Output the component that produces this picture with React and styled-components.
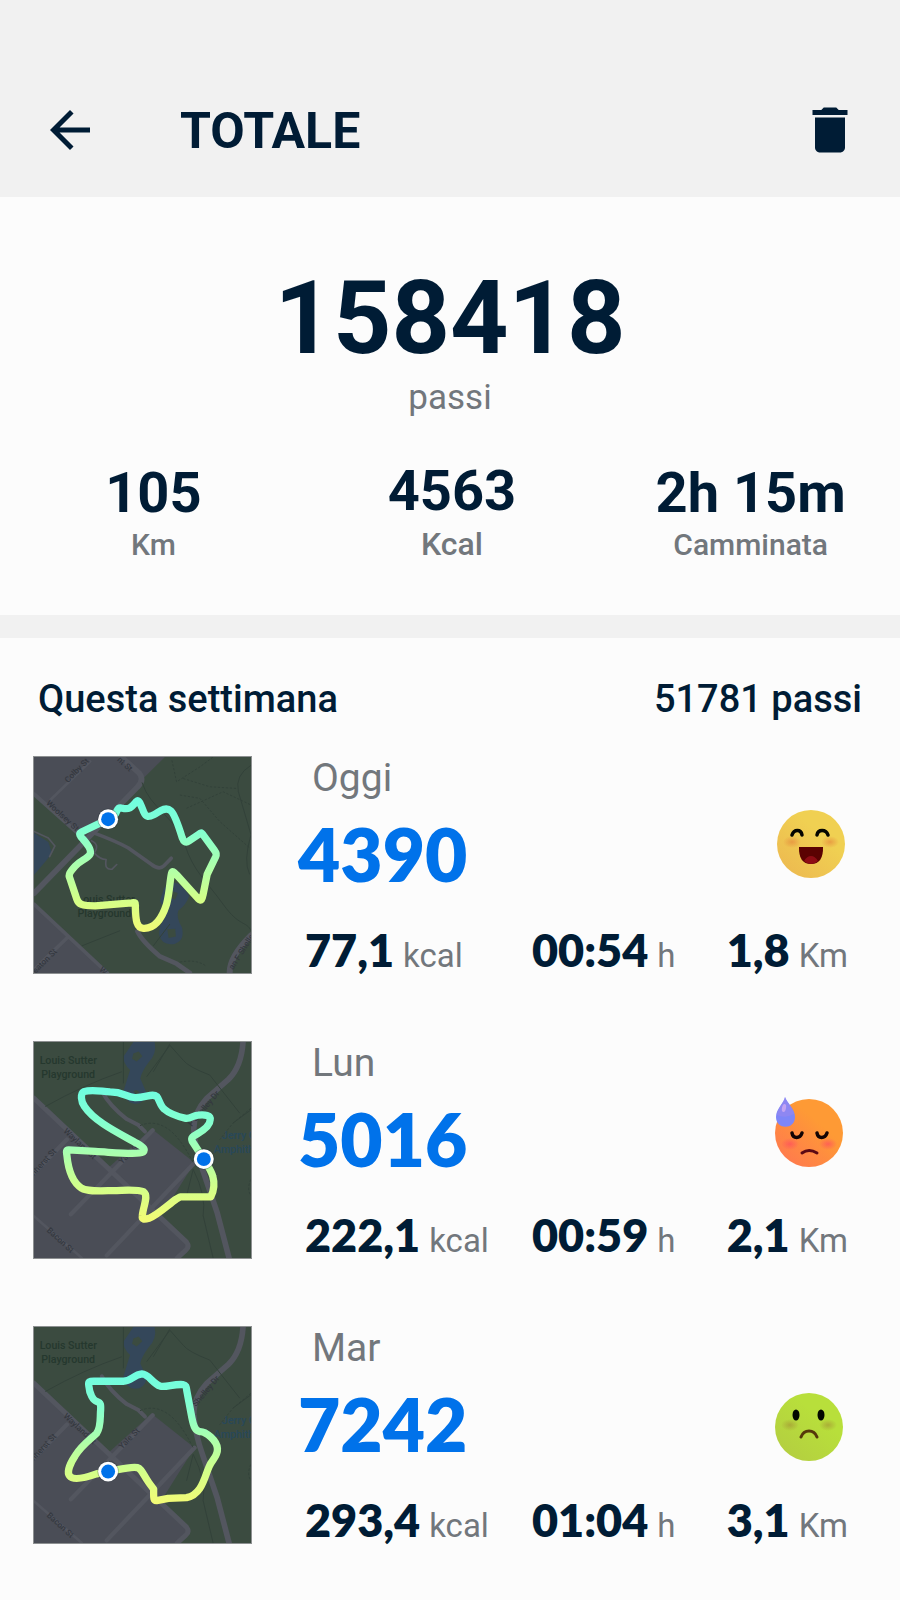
import React from "react";

import styled, { createGlobalStyle } from "styled-components";

import { MdArrowBack, MdDelete } from "react-icons/md";


const GlobalStyle = createGlobalStyle`
  * {
    box-sizing: border-box;
  }

  body {
    margin: 0;
    background: #FCFCFC;
    color: #001C35;
    font-family: Roboto, "Liberation Sans", sans-serif;
  }

  h1, h2, p, ul {
    margin: 0;
    padding: 0;
  }
`;

const Header = styled.header`
  display: flex;
  align-items: center;
  padding: 100px 40px 37px;
  background: #F1F1F1;
`;

const Title = styled.h1`
  flex: 1;
  margin-left: 80px;
  padding-top: 2px;
  font-size: 50px;
  line-height: 58px;
  font-weight: 700;
`;

const IconButton = styled.button`
  display: flex;
  padding: 0;
  border: 0;
  background: none;
  color: inherit;
  font-size: 60px;
  cursor: pointer;
`;

const Summary = styled.section`
  padding: 71px 0 52px;
  border-bottom: 23px solid #F1F1F1;
  text-align: center;
`;

const TotalSteps = styled.p`
  font-size: 102px;
  line-height: 100px;
  font-weight: 700;
`;

const TotalLabel = styled.p`
  margin-top: 10px;
  font-size: 35px;
  line-height: 40px;
  color: #72777C;
`;

const Totals = styled.div`
  display: grid;
  grid-template-columns: repeat(3, 1fr);
  align-items: end;
  margin-top: 41px;
  padding-left: 4px;
`;

const TotalValue = styled.p`
  font-size: 56px;
  line-height: 64px;
  font-weight: 700;
`;

const TotalUnit = styled.p`
  margin-top: 2px;
  font-size: ${(props) => props.$large ? "32px" : "30px"};
  line-height: ${(props) => props.$large ? "38px" : "36px"};
  font-weight: 500;
  color: #72777C;
`;

const WeekHeader = styled.div`
  display: flex;
  justify-content: space-between;
  padding: 39px 38px 35px;
  font-size: 38px;
  line-height: 44px;
  font-weight: 500;
`;

const WeekTitle = styled.h2`
  font-size: inherit;
  font-weight: inherit;
`;

const Days = styled.ul`
  display: flex;
  flex-direction: column;
  gap: 67px;
  padding: 0 52px 54px 33px;
  list-style: none;
`;

const Day = styled.li`
  display: grid;
  grid-template-columns: 219px 1fr;
  column-gap: 46px;
`;

const MapFrame = styled.svg`
  display: block;
  width: 219px;
  height: 218px;
  border: 1px solid #8D9091;
`;

const Info = styled.div`
  display: grid;
  grid-template-columns: 1fr auto;
`;

const DayName = styled.p`
  padding-left: 14px;
  font-size: 39px;
  line-height: 44px;
  color: #72777C;
`;

const DaySteps = styled.p`
  margin-top: 14px;
  font-family: Lato, "Liberation Sans", sans-serif;
  font-size: 73px;
  line-height: 80px;
  font-weight: 800;
  color: #0072EA;
`;

const Face = styled.svg`
  display: block;
  width: 76px;
  height: 138px;
`;

const Stats = styled.div`
  grid-column: 1 / -1;
  display: grid;
  grid-template-columns: 218fr 187fr auto;
  margin-top: 32px;
  padding-left: 7px;
`;

const Stat = styled.p`
  display: flex;
  align-items: baseline;
  gap: 9px;
  height: 48px;
  font-size: 33px;
  line-height: 48px;
  color: #72777C;
  white-space: nowrap;

  strong {
    font-family: Lato, "Liberation Sans", sans-serif;
    font-size: 45px;
    font-weight: 800;
    color: #001C35;
  }
`;

const StreetText = styled.text`
  font-family: Roboto, sans-serif;
  font-size: ${(props) => props.$place ? "32px" : "25px"};
  font-weight: 500;
  fill: ${(props) => props.$fill || "#34383F"};
`;

const road = { fill: "none", stroke: "#53565F", strokeLinecap: "round", strokeLinejoin: "round" };
const trail = { fill: "none", stroke: "#324239", strokeWidth: 3 };

const NorthMap = () => (
    <g>
        <path d="M41 35H435L190 278L41 148Z" fill="#4A4D56" />
        <path d="M41 478L262 688H41Z" fill="#4A4D56" />
        <path d="M41 265L84 292L95 325L78 348L41 392Z" fill="#34475A" />
        <path d="M41 260L84 280L104 304L88 336" {...road} strokeWidth="5" />
        <path d="M432 432Q470 390 508 455Q500 480 475 500Q468 520 486 550Q496 590 464 600Q426 606 418 574Q416 545 432 525Q438 500 420 470Z" fill="#34475A" />
        <path d="M454 440L474 446L466 466L448 460Z" fill="#3B4B40" />
        <path d="M442 556L466 554L468 578L446 582Z" fill="#3B4B40" />
        <path d="M41 447L352 126Q374 105 358 84L304 35" {...road} strokeWidth="17" />
        <path d="M41 147L200 290" {...road} strokeWidth="12" />
        <path d="M90 165L210 48" {...road} strokeWidth="8" />
        <path d="M41 480L262 688M140 582L41 678" {...road} strokeWidth="11" />
        <path d="M215 262Q290 290 325 310L395 360Q418 378 432 364L454 341" {...road} strokeWidth="11" />
        <path d="M214 288Q240 300 222 325Q240 345 258 345Q252 378 276 374L290 360" {...road} strokeWidth="5" />
        <path d="M352 562Q366 592 420 638L470 660L510 688" {...road} strokeWidth="14" />
        <path d="M630 688Q628 640 694 574" {...road} strokeWidth="18" />
        <path d="M366 112C390 190 470 220 495 300S560 410 610 480S680 530 694 560M185 606L300 560M400 606L450 540" {...trail} />
        <path d="M456 45L470 110L540 65L580 35M490 100L570 125L650 130M480 150L540 160L600 230L690 310M500 190L610 140L694 180M480 655Q530 645 560 668" {...trail} strokeDasharray="7 5" />
        <path d="M694 60Q645 90 656 140L694 270Q670 350 690 390" {...trail} />
        <StreetText transform="translate(143 114) rotate(-45)">Colby St</StreetText>
        <StreetText transform="translate(290 45) rotate(43)">nt St</StreetText>
        <StreetText transform="translate(76 176) rotate(43)">Woolsey St</StreetText>
        <StreetText transform="translate(46 690) rotate(-45)">eaton St</StreetText>
        <StreetText transform="translate(236 680) rotate(43)">W</StreetText>
        <StreetText transform="translate(640 680) rotate(-58)">an F Shelley Dr</StreetText>
        <StreetText x="172" y="476" $place $fill="#25372D">Louis Sutter</StreetText>
        <StreetText x="172" y="518" $place $fill="#25372D">Playground</StreetText>
    </g>
);

const SouthMap = () => (
    <g>
        <path d="M41 205L260 420L395 297L524 400L424 560L506 650L468 688H41Z" fill="#4A4D56" />
        <path d="M340 35H404Q412 70 385 98Q365 125 361 145L380 190Q374 222 345 222Q316 220 310 185L330 120Q308 98 311 78Z" fill="#34475A" />
        <path d="M340 70L356 64L367 78L350 94L336 86Z" fill="#3B4B40" />
        <path d="M340 184L350 180L359 188L348 194Z" fill="#3B4B40" />
        <path d="M41 205L500 640Q510 654 498 664L472 688" {...road} strokeWidth="15" />
        <path d="M670 35Q665 110 626 148L560 206Q520 250 522 300Q526 360 548 420L592 550L628 688" {...road} strokeWidth="17" />
        <path d="M245 184Q270 230 320 268L355 286L375 306" {...road} strokeWidth="12" />
        <path d="M398 302L152 556M524 400L260 680M140 330L41 432" {...road} strokeWidth="13" />
        <path d="M41 562L185 688" {...road} strokeWidth="8" />
        <path d="M75 230Q190 165 305 125M310 35V160M380 140L450 45L490 90Q505 110 570 135L660 250M500 500L520 420Q560 500 550 560L580 688M400 125L450 40M694 240L640 280" {...trail} />
        <path d="M360 288Q400 270 440 295T520 400M694 235L640 280L600 330M694 450Q680 480 694 500" {...trail} strokeDasharray="8 5" />
        <StreetText x="58" y="102" $place $fill="#25382E">Louis Sutter</StreetText>
        <StreetText x="63" y="143" $place $fill="#25382E">Playground</StreetText>
        <StreetText transform="translate(128 306) rotate(43)">Wayland St</StreetText>
        <StreetText transform="translate(306 405) rotate(-45)">Yale St</StreetText>
        <StreetText transform="translate(36 446) rotate(-47)">mherst St</StreetText>
        <StreetText transform="translate(78 606) rotate(43)">Bacon St</StreetText>
        <StreetText transform="translate(516 292) rotate(-50)">F Shelley Dr</StreetText>
        <StreetText x="606" y="329" $place $fill="#28485A">Jerry G</StreetText>
        <StreetText x="582" y="370" $place $fill="#28485A">Amphith</StreetText>
    </g>
);

const RouteMap = ({ id, label, base: Base, route, from, to, position }) => (
    <MapFrame viewBox="41 35 653 653" preserveAspectRatio="none" role="img" aria-label={label}>
        <defs>
            <linearGradient id={id} gradientUnits="userSpaceOnUse" x1="0" x2="0" y1={from} y2={to}>
                <stop offset="0" stopColor="#70FDE0" />
                <stop offset="0.25" stopColor="#84FFD0" />
                <stop offset="0.75" stopColor="#D2FF8A" />
                <stop offset="1" stopColor="#F2FB76" />
            </linearGradient>
        </defs>
        <rect x="41" y="35" width="653" height="653" fill="#3B4B40" />
        <Base />
        <path d={route} fill="none" stroke={`url(#${id})`} strokeWidth="22" strokeLinejoin="round" />
        <circle cx={position[0]} cy={position[1]} r="32" fill="#22303A" opacity="0.35" />
        <circle cx={position[0]} cy={position[1]} r="30" fill="#FFFFFF" />
        <circle cx={position[0]} cy={position[1]} r="21" fill="#0072EA" />
    </MapFrame>
);

// body shading and upper cheeks are the same on every face
const FaceBase = ({ id, cx = 37, cy, light, dark, blush, cheekY = -2, children }) => (
    <Face viewBox="0 0 76 138" role="img" aria-label={id}>
        <defs>
            <linearGradient id={`${id}-body`} x1="0.85" y1="0.1" x2="0.15" y2="0.9">
                <stop offset="0.3" stopColor={light} />
                <stop offset="1" stopColor={dark} />
            </linearGradient>
            <radialGradient id={`${id}-blush`}>
                <stop offset="0" stopColor={blush} stopOpacity="0.7" />
                <stop offset="1" stopColor={blush} stopOpacity="0" />
            </radialGradient>
        </defs>
        <g transform={`translate(${cx} ${cy})`}>
            <circle r="34" fill={`url(#${id}-body)`} />
            <ellipse cx="-19" cy={cheekY} rx="9" ry="6" fill={`url(#${id}-blush)`} />
            <ellipse cx="19" cy={cheekY} rx="9" ry="6" fill={`url(#${id}-blush)`} />
            {children}
        </g>
    </Face>
);

const HappyFace = () => (
    <FaceBase id="felice" cx={39} cy={88} light="#F0D052" dark="#EDBB50" blush="#E58A3C">
        <path d="M-19 -9C-17 -15 -10 -15 -9 -9M6 -9C7 -15 15 -15 17 -9" fill="none" stroke="#050500" strokeWidth="3.5" strokeLinecap="round" />
        <path d="M-12 3H12Q12.5 20 0 20T-12 3Z" fill="#5B0202" />
        <path d="M-7 17Q-4 12 0 12T7 17Q4 20 0 20T-7 17Z" fill="#8E0C14" />
    </FaceBase>
);

const TiredFace = () => (
    <FaceBase id="stanco" cy={92} light="#FE9A35" dark="#FF7B4D" blush="#FF4D5E" cheekY={11}>
        <path d="M-17 0C-16 6 -9 6 -7 0M8 0C9 6 16 6 18 0" fill="none" stroke="#120404" strokeWidth="3.5" strokeLinecap="round" />
        <path d="M-7 20Q0 15 8 20" fill="none" stroke="#5B0914" strokeWidth="3" strokeLinecap="round" />
        <path d="M-24 -36C-25 -30 -33 -24 -33 -16C-33 -3 -14 -3 -14 -16C-14 -24 -22 -30 -24 -36Z" fill="#7E86F8" />
        <path d="M-24 -36C-25 -30 -31 -26 -32 -18Q-24 -14 -15 -19C-16 -26 -22 -30 -24 -36Z" fill="#9687F0" opacity="0.7" />
        <ellipse cx="-25" cy="-25" rx="2" ry="4" fill="#C3A4F2" transform="rotate(12 -25 -25)" />
    </FaceBase>
);

const SadFace = () => (
    <FaceBase id="triste" cy={101} light="#B8DF3B" dark="#B4CF40" blush="#A59A35">
        <ellipse cx="-13" cy="-12" rx="3.5" ry="5.5" fill="#030800" />
        <ellipse cx="12" cy="-12" rx="3.5" ry="5.5" fill="#030800" />
        <path d="M-8 10C-5 2 5 2 8 10" fill="none" stroke="#55380A" strokeWidth="3" strokeLinecap="round" />
    </FaceBase>
);

const days = [
    {
        name: "Oggi",
        steps: "4390",
        kcal: "77,1",
        time: "00:54",
        km: "1,8",
        face: HappyFace,
        map: {
            base: NorthMap,
            position: [264, 223],
            from: 160,
            to: 560,
            route: "M264 223L184 262C174 267 180 275 188 283C205 302 214 318 210 328C202 343 182 346 165 365C150 382 143 390 149 402L170 465C175 480 184 485 225 485L335 476C350 474 346 478 346 490C347 530 350 552 370 553C404 555 426 524 440 480C450 440 450 405 455 386C457 378 461 382 470 391L535 463C545 473 547 465 550 450L562 390L587 338C591 329 590 326 583 316L551 272C545 262 543 263 535 270L507 289C497 296 491 290 487 279C478 250 464 208 453 198C435 182 414 204 403 209C384 218 378 217 371 201C362 179 357 162 350 169C338 182 331 196 307 190C295 185 293 193 286 207Z",
        },
    },
    {
        name: "Lun",
        steps: "5016",
        kcal: "222,1",
        time: "00:59",
        km: "2,1",
        face: TiredFace,
        map: {
            base: SouthMap,
            position: [552, 389],
            from: 180,
            to: 570,
            route: "M552 389L517 335C512 324 521 319 532 313C553 301 571 288 571 271C574 256 555 254 535 256C516 257 516 267 498 266C468 259 443 247 433 238C421 228 417 207 411 200C397 189 377 204 345 203C318 202 311 186 270 186C240 184 215 177 191 185C180 191 182 215 193 230C223 276 299 312 350 341C373 355 377 360 369 368C354 376 295 370 226 366L145 361C136 361 139 369 140 378C144 420 158 460 184 477C202 488 240 485 280 484C325 483 355 480 371 488C387 500 369 533 367 560C365 573 374 572 387 568C412 559 447 525 469 510L481 503H573C583 484 584 459 579 441C575 425 565 411 552 389Z",
        },
    },
    {
        name: "Mar",
        steps: "7242",
        kcal: "293,4",
        time: "01:04",
        km: "3,1",
        face: SadFace,
        map: {
            base: SouthMap,
            position: [264, 472],
            from: 180,
            to: 565,
            route: "M264 472L229 479C195 491 159 500 148 485C139 473 151 445 165 424C187 389 211 375 229 357C242 340 240 314 241 293C243 268 242 264 230 260C219 257 208 238 206 213C203 199 209 199 221 199H310C335 199 340 179 366 177C386 177 397 205 421 214C439 218 460 207 489 209C500 211 499 217 501 229L516 309C522 340 528 350 540 351C558 350 592 379 593 403C594 427 578 434 568 457C554 488 547 541 500 551L445 553L410 560C400 561 401 550 401 534V525L387 506C369 481 365 463 352 460C333 456 305 464 264 472Z",
        },
    },
];

const totals = [
    { value: "105", unit: "Km" },
    { value: "4563", unit: "Kcal", large: true },
    { value: "2h 15m", unit: "Camminata" },
];

const App = () => {
    return (
        <>
            <GlobalStyle />
            <Header>
                <IconButton type="button" aria-label="Indietro"><MdArrowBack /></IconButton>
                <Title>TOTALE</Title>
                <IconButton type="button" aria-label="Elimina"><MdDelete /></IconButton>
            </Header>
            <main>
                <Summary>
                    <TotalSteps>158418</TotalSteps>
                    <TotalLabel>passi</TotalLabel>
                    <Totals>
                        {totals.map((total) => (
                            <div key={total.unit}>
                                <TotalValue>{total.value}</TotalValue>
                                <TotalUnit $large={total.large}>{total.unit}</TotalUnit>
                            </div>
                        ))}
                    </Totals>
                </Summary>
                <WeekHeader>
                    <WeekTitle>Questa settimana</WeekTitle>
                    <span>51781 passi</span>
                </WeekHeader>
                <Days>
                    {days.map((day) => (
                        <Day key={day.name}>
                            <RouteMap id={`percorso-${day.name}`} label={`Percorso ${day.name}`} {...day.map} />
                            <Info>
                                <div>
                                    <DayName>{day.name}</DayName>
                                    <DaySteps>{day.steps}</DaySteps>
                                </div>
                                <day.face />
                                <Stats>
                                    <Stat><strong>{day.kcal}</strong>kcal</Stat>
                                    <Stat><strong>{day.time}</strong>h</Stat>
                                    <Stat><strong>{day.km}</strong>Km</Stat>
                                </Stats>
                            </Info>
                        </Day>
                    ))}
                </Days>
            </main>
        </>
    )
};

export default App;
